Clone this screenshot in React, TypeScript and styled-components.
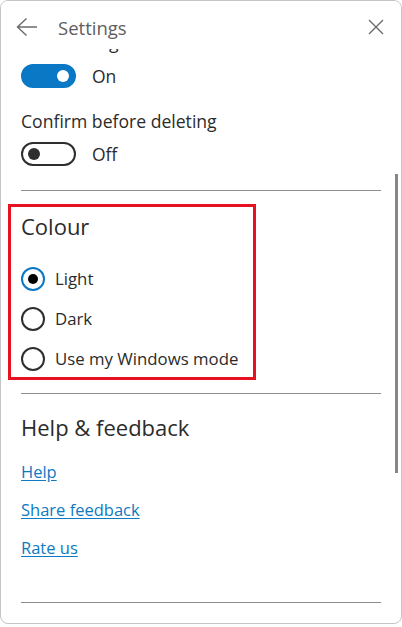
import { useLayoutEffect, useRef } from "react";
import styled, { createGlobalStyle } from "styled-components";

const GlobalStyle = createGlobalStyle`
  html, body {
    margin: 0;
    padding: 0;
    background: #ffffff;
  }
  * {
    box-sizing: border-box;
  }
`;

const Panel = styled.div`
  width: 402px;
  height: 624px;
  border: 1px solid #c4c4c4;
  border-radius: 8px;
  background: #ffffff;
  display: flex;
  flex-direction: column;
  overflow: hidden;
  font-family: "Open Sans", "Noto Sans", sans-serif;
  color: #2b2b2b;
`;

const Header = styled.header`
  height: 48px;
  flex-shrink: 0;
  display: flex;
  align-items: center;
  padding: 4px 17px 0 15px;
  background: #ffffff;
  position: relative;
  z-index: 1;
`;

const IconButton = styled.button`
  border: 0;
  background: transparent;
  padding: 0;
  display: flex;
  align-items: center;
  justify-content: center;
  color: #6b6b6b;
  cursor: pointer;
`;

const Title = styled.h1`
  margin: 0 0 0 20px;
  font-size: 18.5px;
  font-weight: 400;
  color: #5e5e5e;
  flex: 1;
`;

const Body = styled.div`
  flex: 1;
  position: relative;
  overflow: hidden;
`;

const Scroller = styled.div`
  height: 100%;
  overflow: hidden;
`;

const Content = styled.div`
  padding: 12px 20px 40px 20px;
`;

const ScrollThumb = styled.div`
  position: absolute;
  right: 3px;
  top: 125px;
  width: 3px;
  height: 299px;
  background: #878787;
`;

const Label = styled.div<{ $gap?: number }>`
  font-size: 17.6px;
  line-height: 24px;
  margin-top: ${(p) => p.$gap ?? 0}px;
`;

const ToggleRow = styled.div<{ $gap?: number }>`
  display: flex;
  align-items: center;
  gap: 16px;
  margin-top: ${(p) => p.$gap ?? 0}px;
  font-size: 17.5px;
  line-height: 24px;
`;

const Track = styled.span<{ $on: boolean }>`
  width: 55px;
  height: 24px;
  border-radius: 12px;
  display: flex;
  align-items: center;
  justify-content: ${(p) => (p.$on ? "flex-end" : "flex-start")};
  padding: 0 5px;
  background: ${(p) => (p.$on ? "#0a78c4" : "#ffffff")};
  border: 2px solid ${(p) => (p.$on ? "#0a78c4" : "#2e2e2e")};
`;

const Knob = styled.span<{ $on: boolean }>`
  width: 12px;
  height: 12px;
  border-radius: 50%;
  background: ${(p) => (p.$on ? "#ffffff" : "#2e2e2e")};
`;

const Divider = styled.hr<{ $gap: number }>`
  border: 0;
  border-top: 1px solid #8c8c8c;
  margin: ${(p) => p.$gap}px 0 0 0;
`;

const Highlight = styled.section`
  margin: 13px 0 0 -13px;
  width: 248px;
  border: 3px solid #e81123;
  padding: 4px 0 6px 10px;
`;

const SectionTitle = styled.h2<{ $gap?: number }>`
  margin: ${(p) => p.$gap ?? 0}px 0 0 0;
  font-size: 22px;
  font-weight: 400;
  line-height: 30px;
  color: #2b2b2b;
`;

const RadioList = styled.div`
  display: flex;
  flex-direction: column;
  gap: 16px;
  margin-top: 26px;
`;

const RadioRow = styled.label`
  display: flex;
  align-items: center;
  gap: 10px;
  font-size: 16.8px;
  line-height: 24px;
`;

const RadioCircle = styled.span<{ $checked: boolean }>`
  width: 24px;
  height: 24px;
  border-radius: 50%;
  border: 2px solid ${(p) => (p.$checked ? "#0a78c4" : "#2e2e2e")};
  display: flex;
  align-items: center;
  justify-content: center;
  &::after {
    content: "";
    display: ${(p) => (p.$checked ? "block" : "none")};
    width: 10px;
    height: 10px;
    border-radius: 50%;
    background: #000000;
  }
`;

const Links = styled.div`
  display: flex;
  flex-direction: column;
  gap: 14px;
  margin-top: 18px;
`;

const Link = styled.a`
  font-size: 16.5px;
  line-height: 24px;
  color: #0d7ac3;
  text-decoration: underline;
  text-underline-offset: 2px;
  width: fit-content;
`;

const BackIcon = () => (
  <svg width="22" height="20" viewBox="0 0 22 20" fill="none">
    <path
      d="M1.5 10H21M10.5 1.5L1.5 10L10.5 18.5"
      stroke="currentColor"
      strokeWidth="1.4"
    />
  </svg>
);

const CloseIcon = () => (
  <svg width="16" height="16" viewBox="0 0 16 16" fill="none">
    <path d="M1 1L15 15M15 1L1 15" stroke="currentColor" strokeWidth="1.4" />
  </svg>
);

const colourOptions = [
  { label: "Light", checked: true },
  { label: "Dark", checked: false },
  { label: "Use my Windows mode", checked: false },
];

const App = () => {
  const scroller = useRef<HTMLDivElement>(null);

  useLayoutEffect(() => {
    if (scroller.current) scroller.current.scrollTop = 31;
  }, []);

  return (
    <>
      <GlobalStyle />
      <Panel>
        <Header>
          <IconButton aria-label="Back">
            <BackIcon />
          </IconButton>
          <Title>Settings</Title>
          <IconButton aria-label="Close">
            <CloseIcon />
          </IconButton>
        </Header>
        <Body>
          <Scroller ref={scroller}>
            <Content>
              <Label>Enable insights</Label>
              <ToggleRow $gap={10}>
                <Track $on>
                  <Knob $on />
                </Track>
                On
              </ToggleRow>
              <Label $gap={21}>Confirm before deleting</Label>
              <ToggleRow $gap={9}>
                <Track $on={false}>
                  <Knob $on={false} />
                </Track>
                Off
              </ToggleRow>
              <Divider $gap={24} />
              <Highlight>
                <SectionTitle>Colour</SectionTitle>
                <RadioList>
                  {colourOptions.map((o) => (
                    <RadioRow key={o.label}>
                      <RadioCircle $checked={o.checked} />
                      {o.label}
                    </RadioRow>
                  ))}
                </RadioList>
              </Highlight>
              <Divider $gap={13} />
              <SectionTitle $gap={18}>Help &amp; feedback</SectionTitle>
              <Links>
                <Link href="#">Help</Link>
                <Link href="#">Share feedback</Link>
                <Link href="#">Rate us</Link>
              </Links>
              <Divider $gap={42} />
            </Content>
          </Scroller>
          <ScrollThumb />
        </Body>
      </Panel>
    </>
  );
};

export default App;
